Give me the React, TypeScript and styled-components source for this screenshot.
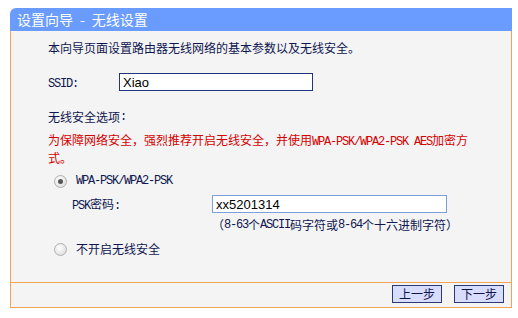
import React from 'react';
import styled, {createGlobalStyle} from 'styled-components';

const GlobalStyle = createGlobalStyle({
  body: {
    margin: 0,
    background: "#ffffff",
    fontFamily: "'Noto Sans CJK SC', 'Liberation Sans', sans-serif",
    fontSize: "12px",
  },
})

const Page = styled.div({
  padding: "8px 6px 0 10px",
})

const Panel = styled.div({
  width: "502px",
})

const TitleBar = styled.div({
  height: "23px",
  background: "#6a9bff",
  borderTopLeftRadius: "6px",
  color: "#ffffff",
  fontSize: "14px",
  lineHeight: "23px",
  paddingLeft: "7px",
  whiteSpace: "pre",
})

const Body = styled.div({
  background: "#f4f4f4",
  borderLeft: "1px solid #f2a455",
  borderRight: "1px solid #f2a455",
  padding: "8px 38px 24px 37px",
  color: "#0f1650",
  lineHeight: "18px",
})

const Line = styled.div<{top?: number}>(props => ({
  marginTop: `${props.top ?? 0}px`,
  height: "18px",
  display: "flex",
  alignItems: "center",
}))

// half-width latin in the old bitmap font: 6px per char, full 12px height
const Mono = styled.span({
  fontFamily: "'Liberation Mono', monospace",
  fontSize: "12px",
  lineHeight: "1",
  letterSpacing: "-1.2px",
})

const Label = styled.span<{width: number}>(props => ({
  width: `${props.width}px`,
  flexShrink: 0,
}))

const Field = styled.input<{width: number, focused?: boolean}>(props => ({
  boxSizing: "border-box",
  width: `${props.width}px`,
  height: "18px",
  margin: 0,
  padding: "0 3px",
  border: props.focused ? "1px solid #7d9fdc" : "1px solid #23357a",
  background: "#ffffff",
  fontFamily: "'Liberation Sans', Arial, sans-serif",
  fontSize: "13px",
  color: "#000000",
  outline: "none",
}))

const Warning = styled.div({
  marginTop: "5px",
  height: "36px",
  color: "#d40000",
})

const Option = styled.label({
  display: "flex",
  alignItems: "center",
  height: "18px",
  paddingLeft: "6px",
  gap: "9px",
})

const Radio = styled.span<{checked?: boolean}>(props => ({
  boxSizing: "border-box",
  width: "13px",
  height: "13px",
  borderRadius: "50%",
  border: "1px solid #b0b0b0",
  background: "radial-gradient(circle at 40% 35%, #ffffff, #d6d6d6)",
  display: "flex",
  alignItems: "center",
  justifyContent: "center",
  "&::after": props.checked ? {
    content: '""',
    width: "5px",
    height: "5px",
    borderRadius: "50%",
    background: "#555555",
  } : {},
}))

const Indent = styled.div<{top: number, left: number}>(props => ({
  marginTop: `${props.top}px`,
  paddingLeft: `${props.left}px`,
  display: "flex",
  alignItems: "center",
  height: "18px",
}))

const Footer = styled.div({
  background: "#f4f4f4",
  border: "1px solid #f2a455",
  padding: "2px 7px 4px 0",
  display: "flex",
  justifyContent: "flex-end",
  gap: "12px",
})

const StepButton = styled.button({
  width: "50px",
  height: "18px",
  padding: 0,
  border: "1px solid #2a3978",
  background: "#d8dcfd",
  color: "#10144a",
  fontFamily: "'Noto Sans CJK SC', sans-serif",
  fontSize: "12px",
  lineHeight: "16px",
})

function App() {
  return (
    <Page>
      <GlobalStyle />
      <Panel>
        <TitleBar>{"设置向导\u2002-\u2002无线设置"}</TitleBar>
        <Body>
          <Line>本向导页面设置路由器无线网络的基本参数以及无线安全。</Line>
          <Line top={16}>
            <Label width={71}><Mono>SSID:</Mono></Label>
            <Field width={194} defaultValue="Xiao" readOnly />
          </Line>
          <Line top={17}>无线安全选项<Mono>:</Mono></Line>
          <Warning>
            为保障网络安全，强烈推荐开启无线安全，并使用<Mono>WPA-PSK/WPA2-PSK AES</Mono>加密方<br />式。
          </Warning>
          <Line top={5}>
            <Option>
              <Radio checked />
              <Mono>WPA-PSK/WPA2-PSK</Mono>
            </Option>
          </Line>
          <Indent top={5} left={24}>
            <Label width={140}><Mono>PSK</Mono>密码<Mono>:</Mono></Label>
            <Field width={235} focused defaultValue="xx5201314" autoFocus />
          </Indent>
          <Indent top={3} left={164}>
            （<Mono>8-63</Mono>个<Mono>ASCII</Mono>码字符或<Mono>8-64</Mono>个十六进制字符）
          </Indent>
          <Line top={6}>
            <Option>
              <Radio />
              不开启无线安全
            </Option>
          </Line>
        </Body>
        <Footer>
          <StepButton>上一步</StepButton>
          <StepButton>下一步</StepButton>
        </Footer>
      </Panel>
    </Page>
  );
}

export default App;
